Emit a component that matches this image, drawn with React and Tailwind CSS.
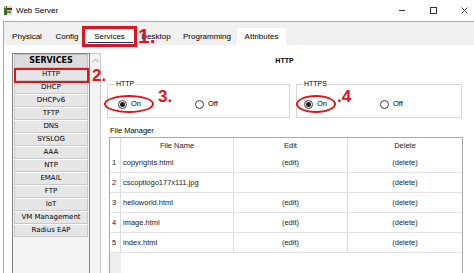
const TABS = [
  { label: 'Physical', w: 'w-[46px]' },
  { label: 'Config', w: 'w-[34px]' },
  { label: 'Services', w: 'w-[51px]', active: true },
  { label: 'Desktop', w: 'w-[42px]' },
  { label: 'Programming', w: 'w-[60px]' },
  { label: 'Attributes', w: 'w-[49px]', white: true },
];

const SERVICES = [
  'HTTP', 'DHCP', 'DHCPv6', 'TFTP', 'DNS', 'SYSLOG', 'AAA',
  'NTP', 'EMAIL', 'FTP', 'IoT', 'VM Management', 'Radius EAP',
];

const FILES = [
  { name: 'copyrights.html', edit: true },
  { name: 'cscoptlogo177x111.jpg', edit: false },
  { name: 'helloworld.html', edit: true },
  { name: 'image.html', edit: true },
  { name: 'index.html', edit: true },
];

function Radio({ checked, label }) {
  return (
    <div className="flex items-center">
      <div className="w-[9px] h-[9px] rounded-full border border-[#3a3a3a] bg-white flex items-center justify-center">
        {checked && <div className="w-[5px] h-[5px] rounded-full bg-[#1e1e1e]" />}
      </div>
      <span className="ml-[4px] text-[7.5px] leading-none">{label}</span>
    </div>
  );
}

function Mark({ children, className }) {
  return (
    <span className={'absolute font-bold leading-none text-[#e0141e] ' + className}>{children}</span>
  );
}

export default function App() {
  return (
    <div className="w-[474px] h-[273px] overflow-hidden bg-white flex flex-col text-black font-['Liberation_Sans',Arial,sans-serif]">

      {/* Title bar */}
      <div className="h-[21px] flex items-center shrink-0">
        <svg className="ml-[3px]" width="10" height="11" viewBox="0 0 10 11">
          <rect x="1" y="1" width="8" height="9" fill="#d9d9d9" />
          <rect x="1" y="1" width="3" height="9" fill="#3f6d2a" />
          <rect x="4" y="3" width="5" height="2" fill="#8a1d1d" />
          <rect x="4" y="6" width="4" height="2" fill="#5b8f3a" />
          <rect x="1" y="1" width="2" height="2" fill="#b1d26b" />
        </svg>
        <span className="ml-[3px] text-[8px] leading-none">Web Server</span>
        <div className="ml-auto flex items-center mr-[6px]">
          <div className="w-[6px] h-px bg-[#333]" />
          <div className="ml-[25px] w-[7px] h-[7px] border border-[#333]" />
          <svg className="ml-[24px]" width="7" height="7" viewBox="0 0 7 7">
            <path d="M0.5 0.5 L6.5 6.5 M6.5 0.5 L0.5 6.5" stroke="#333" strokeWidth="0.9" />
          </svg>
        </div>
      </div>

      {/* Window body */}
      <div className="flex-1 min-h-0 ml-[3px] border-l border-t border-[#a8a8a8] flex flex-col">

        {/* Tabs */}
        <div className="relative h-[23px] shrink-0 bg-[#f0f0f0] flex items-end">
          {TABS.map((t) => (
            <div
              key={t.label}
              className={[
                'relative h-[17px] flex items-center justify-center text-[8px] leading-none',
                t.w,
                t.active || t.white ? 'bg-white' : '',
              ].join(' ')}
            >
              {t.label}
              {t.active && <div className="absolute left-[4px] right-[2px] bottom-[2px] h-px bg-[#1c2a5c]" />}
            </div>
          ))}
          <div className="absolute left-[78px] top-[4px] w-[55px] h-[21px] border-[3px] border-[#e0141e]" />
          <Mark className="left-[134px] top-[3px] text-[21px]">1.</Mark>
        </div>

        {/* Content */}
        <div className="flex-1 min-h-0 flex">

          {/* Service list */}
          <div className="pl-[8px] pt-[8px] flex">
            <div className="relative w-[78px] h-[230px] border border-[#828282] bg-[#f4f4f4] flex flex-col font-['DejaVu_Sans',Verdana,sans-serif]">
              <div className="h-[14px] mx-px bg-[#dcdcdc] border border-[#c4c4c4] flex items-center justify-center text-[8px] font-bold leading-none">
                SERVICES
              </div>
              {SERVICES.map((s) => (
                <div
                  key={s}
                  className="h-[13px] mx-px bg-[#e6e6e6] border-x border-b border-[#c8c8c8] border-t-white border-t flex items-center justify-center text-[7px] leading-none"
                >
                  {s}
                </div>
              ))}
              <div className="absolute left-px top-[14px] w-[75px] h-[15px] border-2 border-[#e0141e]" />
              <Mark className="left-[79px] top-[13px] text-[17px] font-['Liberation_Sans',Arial,sans-serif]">2.</Mark>
            </div>
            <div className="w-[11px] h-[230px] border-y border-r border-[#c8c8c8] bg-[#f4f4f4] flex justify-center pt-[4px]">
              <svg width="7" height="5" viewBox="0 0 7 5">
                <path d="M0.5 4 L3.5 1 L6.5 4" fill="none" stroke="#a0a0a0" strokeWidth="1" />
              </svg>
            </div>
          </div>

          {/* Right panel */}
          <div className="ml-[6px] w-[355px] flex flex-col">
            <div className="mt-[11px] h-[10px] leading-[10px] text-center text-[7px] font-bold">HTTP</div>

            <div className="mt-[18px] flex gap-[6px]">
              <div className="relative w-[183px] h-[34px] border border-[#d6d6d6] flex items-center pt-[6px] pl-[10px]">
                <span className="absolute left-[7px] -top-[5px] bg-white px-px text-[7px] leading-none">HTTP</span>
                <div className="w-[77px]"><Radio checked label="On" /></div>
                <Radio label="Off" />
                <div className="absolute left-[-4px] top-[10px] w-[50px] h-[18px] rounded-[50%] border-[2.5px] border-[#e0141e]" />
                <Mark className="left-[50px] top-[3px] text-[17px]">3.</Mark>
              </div>
              <div className="relative w-[166px] h-[34px] border border-[#d6d6d6] flex items-center pt-[6px] pl-[7px]">
                <span className="absolute left-[6px] -top-[5px] bg-white px-px text-[7px] leading-none">HTTPS</span>
                <div className="w-[76px]"><Radio checked label="On" /></div>
                <Radio label="Off" />
                <div className="absolute left-[-1px] top-[10px] w-[40px] h-[18px] rounded-[50%] border-[2.5px] border-[#e0141e]" />
                <Mark className="left-[40px] top-[3px] text-[17px]">.4</Mark>
              </div>
            </div>

            <div className="mt-[8px] ml-[3px] h-[10px] leading-[10px] text-[7.5px]">File Manager</div>

            {/* File table */}
            <div className="mt-[1px] ml-[2px] w-[354px] flex-1 border-x border-t border-[#a8a8a8] flex flex-col text-[7.5px] leading-none text-[#222]">
              <div className="h-[15px] flex shrink-0">
                <div className="w-[11px] border-r border-[#dcdcdc]" />
                <div className="w-[113px] border-r border-[#dcdcdc] flex items-center justify-center">File Name</div>
                <div className="w-[114px] border-r border-[#dcdcdc] flex items-center justify-center">Edit</div>
                <div className="w-[114px] flex items-center justify-center">Delete</div>
              </div>
              {FILES.map((f, i) => (
                <div key={f.name} className="h-[20px] flex shrink-0 border-b border-[#e2e2e2]">
                  <div className="w-[11px] border-r border-[#dcdcdc] flex items-center pl-[2px]">{i + 1}</div>
                  <div className="w-[113px] border-r border-[#dcdcdc] flex items-center pl-[2px]">{f.name}</div>
                  <div className="w-[114px] border-r border-[#dcdcdc] flex items-center justify-center">{f.edit ? '(edit)' : ''}</div>
                  <div className="w-[114px] flex items-center justify-center">(delete)</div>
                </div>
              ))}
              <div className="flex-1 flex">
                <div className="w-[11px] bg-[#eeeeee]" />
              </div>
            </div>
          </div>
        </div>
      </div>
    </div>
  );
}
